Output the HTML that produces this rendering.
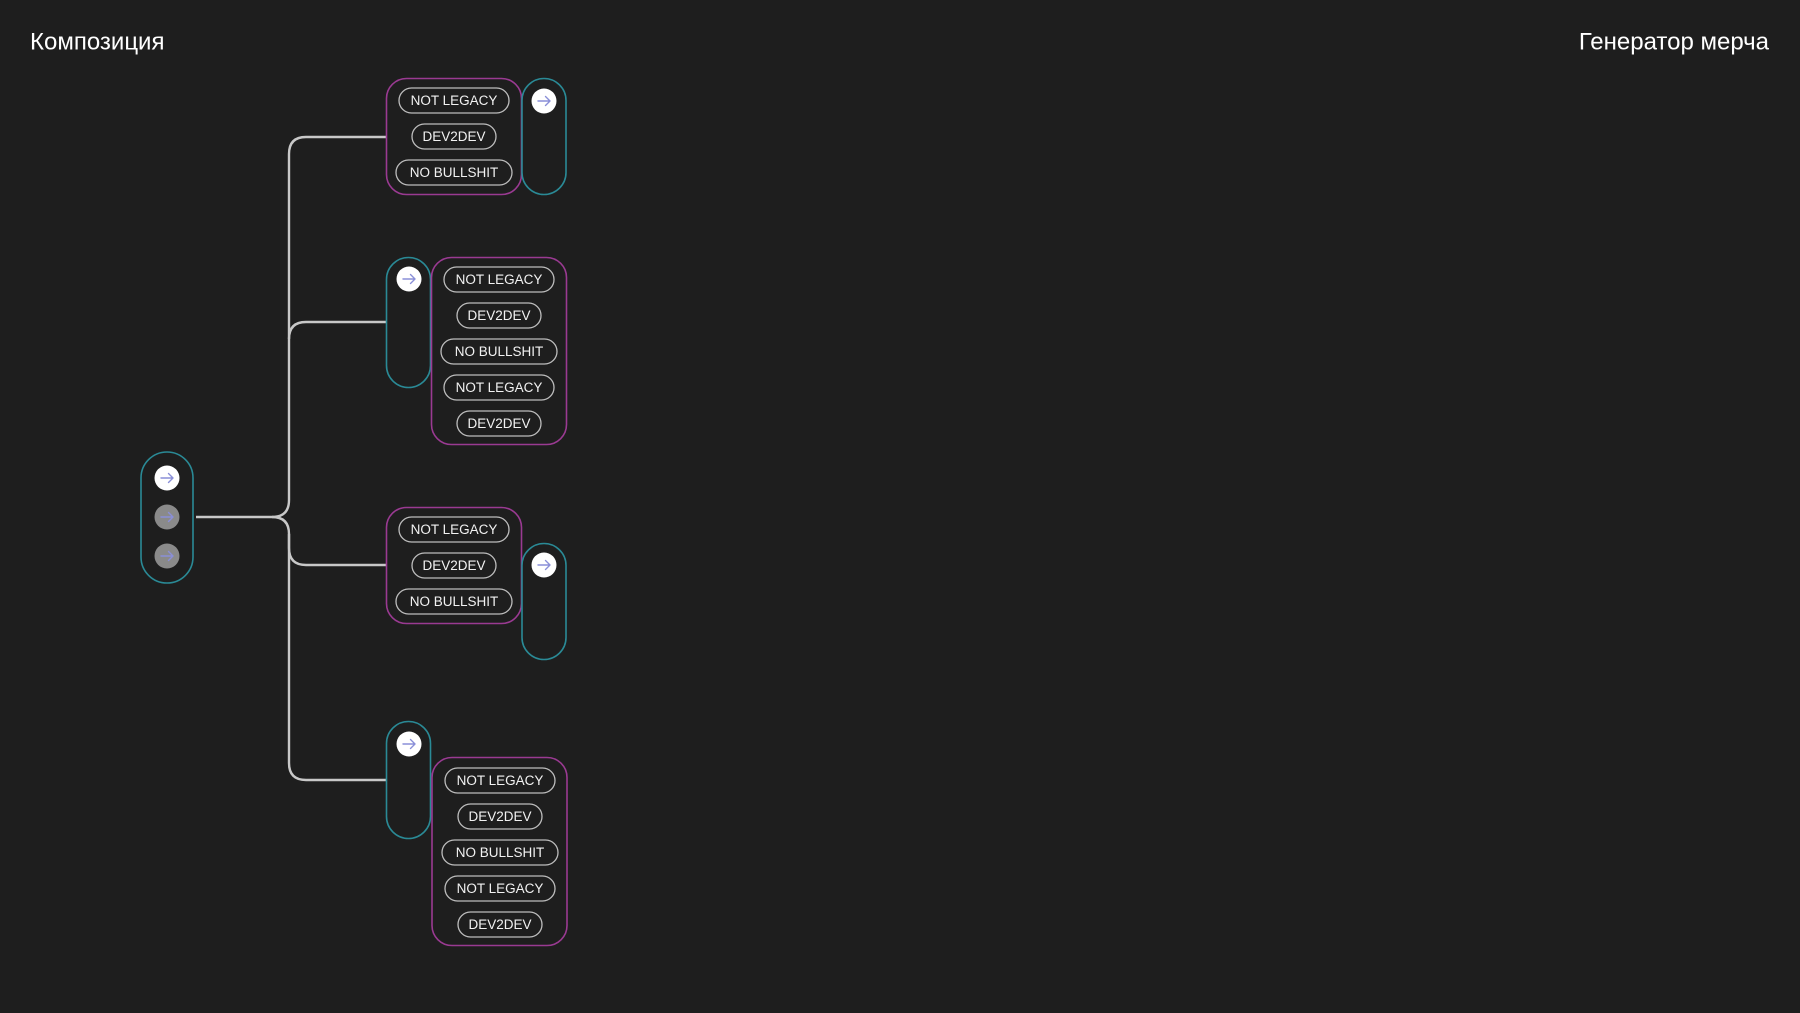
<!DOCTYPE html>
<html><head><meta charset="utf-8"><style>
html,body{margin:0;padding:0;background:#1e1e1e;}
svg{display:block}
</style></head><body>
<svg width="1800" height="1013" viewBox="0 0 1800 1013" xmlns="http://www.w3.org/2000/svg">
<defs>
<g id="arr"><path d="M-6 0H6M1.5-4.5L6 0L1.5 4.5" fill="none" stroke="#8a8fd8" stroke-width="1.4" stroke-linecap="round" stroke-linejoin="round"/></g>
<g id="nl"><rect x="-55" y="-12.5" width="110" height="25" rx="12.5" fill="#1e1e1e" stroke="#bdbdbd" stroke-width="1.3"/><text y="4.3" text-anchor="middle" font-family="Liberation Sans, sans-serif" font-size="13.5" fill="#f2f2f2">NOT LEGACY</text></g>
<g id="dd"><rect x="-42" y="-12.5" width="84" height="25" rx="12.5" fill="#1e1e1e" stroke="#bdbdbd" stroke-width="1.3"/><text y="4.3" text-anchor="middle" font-family="Liberation Sans, sans-serif" font-size="13.5" fill="#f2f2f2">DEV2DEV</text></g>
<g id="nb"><rect x="-58" y="-12.5" width="116" height="25" rx="12.5" fill="#1e1e1e" stroke="#bdbdbd" stroke-width="1.3"/><text y="4.3" text-anchor="middle" font-family="Liberation Sans, sans-serif" font-size="13.5" fill="#f2f2f2">NO BULLSHIT</text></g>
<g id="wc"><circle r="12.5" fill="#fff"/><use href="#arr"/></g>
</defs>
<rect width="1800" height="1013" fill="#1e1e1e"/>
<text x="30" y="49.5" font-family="Liberation Sans, sans-serif" font-size="24" fill="#fff">Композиция</text>
<text x="1769" y="49.5" text-anchor="end" font-family="Liberation Sans, sans-serif" font-size="24" fill="#fff">Генератор мерча</text>

<g fill="none" stroke="#c8c8c8" stroke-width="2.4">
<path d="M386 137H306Q289 137 289 154V500"/>
<path d="M386 322H306Q289 322 289 339"/>
<path d="M196 517H272Q289 517 289 500"/>
<path d="M272 517Q289 517 289 534V763Q289 780 306 780H386"/>
<path d="M289 534V548Q289 565 306 565H386"/>
</g>

<rect x="141" y="452" width="52" height="131" rx="26" fill="none" stroke="#2a8a96" stroke-width="1.6"/>
<use href="#wc" x="167" y="478"/>
<circle cx="167" cy="517" r="12.5" fill="#8a8a8a"/><use href="#arr" x="167" y="517"/>
<circle cx="167" cy="556" r="12.5" fill="#8a8a8a"/><use href="#arr" x="167" y="556"/>

<g fill="none" stroke-width="1.6">
<rect x="386.5" y="78.5" width="135" height="116" rx="20" stroke="#9a3a92"/>
<rect x="522" y="78.5" width="44" height="116" rx="22" stroke="#2a8a96"/>
<rect x="386.5" y="257.5" width="44" height="130" rx="22" stroke="#2a8a96"/>
<rect x="431.5" y="257.5" width="135" height="187" rx="20" stroke="#9a3a92"/>
<rect x="386.5" y="507.5" width="135" height="116" rx="20" stroke="#9a3a92"/>
<rect x="522" y="543.5" width="44" height="116" rx="22" stroke="#2a8a96"/>
<rect x="386.5" y="721.5" width="44" height="117" rx="22" stroke="#2a8a96"/>
<rect x="432" y="757.5" width="135" height="188" rx="20" stroke="#9a3a92"/>
</g>

<use href="#wc" x="544" y="101"/>
<use href="#wc" x="409" y="279"/>
<use href="#wc" x="544" y="565"/>
<use href="#wc" x="409" y="744"/>

<use href="#nl" x="454" y="100.5"/><use href="#dd" x="454" y="136.5"/><use href="#nb" x="454" y="172.5"/>
<use href="#nl" x="499" y="279.5"/><use href="#dd" x="499" y="315.5"/><use href="#nb" x="499" y="351.5"/><use href="#nl" x="499" y="387.5"/><use href="#dd" x="499" y="423.5"/>
<use href="#nl" x="454" y="529.5"/><use href="#dd" x="454" y="565.5"/><use href="#nb" x="454" y="601.5"/>
<use href="#nl" x="500" y="780.5"/><use href="#dd" x="500" y="816.5"/><use href="#nb" x="500" y="852.5"/><use href="#nl" x="500" y="888.5"/><use href="#dd" x="500" y="924.5"/>
</svg>
</body></html>
